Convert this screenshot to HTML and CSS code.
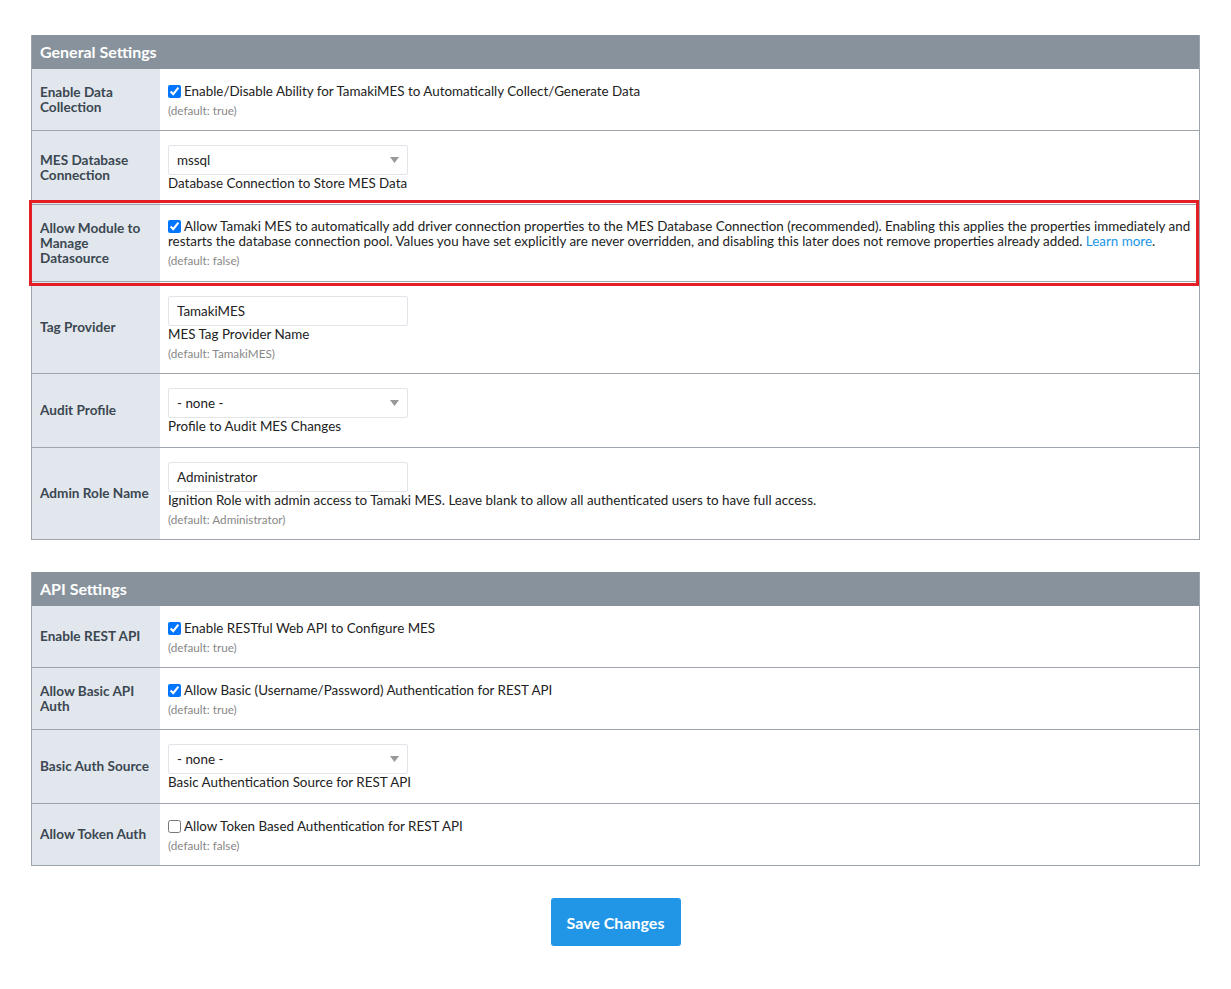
FILE: index.html
```html
<!DOCTYPE html>
<html lang="en">
<head>
  <meta charset="UTF-8" />
  <meta name="viewport" content="width=device-width, initial-scale=1.0" />
  <title>Tamaki MES Settings</title>
  <link rel="stylesheet" href="styles.css">
</head>
<body>
  <div class="panel">
    <div class="panel-head">General Settings</div>

    <div class="row">
      <div class="row-label">Enable Data Collection</div>
      <div class="row-value">
        <label class="check"><input type="checkbox" checked />Enable/Disable Ability for TamakiMES to Automatically Collect/Generate Data</label>
        <div class="hint">(default: true)</div>
      </div>
    </div>

    <div class="row">
      <div class="row-label">MES Database Connection</div>
      <div class="row-value">
        <div class="select"><span>mssql</span><svg width="9" height="6" viewBox="0 0 9 6"><path d="M0 0h9L4.5 6z" fill="#999"/></svg></div>
        <div class="desc">Database Connection to Store MES Data</div>
      </div>
    </div>

    <div class="row flagged">
      <div class="row-label">Allow Module to Manage Datasource</div>
      <div class="row-value">
        <label class="check"><input type="checkbox" checked />Allow Tamaki MES to automatically add driver connection properties to the MES Database Connection (recommended). Enabling this applies the properties immediately and restarts the database connection pool. Values you have set explicitly are never overridden, and disabling this later does not remove properties already added. <a href="#">Learn more</a>.</label>
        <div class="hint">(default: false)</div>
      </div>
    </div>

    <div class="row">
      <div class="row-label">Tag Provider</div>
      <div class="row-value">
        <input class="field" type="text" value="TamakiMES" />
        <div class="desc">MES Tag Provider Name</div>
        <div class="hint">(default: TamakiMES)</div>
      </div>
    </div>

    <div class="row">
      <div class="row-label">Audit Profile</div>
      <div class="row-value">
        <div class="select"><span>- none -</span><svg width="9" height="6" viewBox="0 0 9 6"><path d="M0 0h9L4.5 6z" fill="#999"/></svg></div>
        <div class="desc">Profile to Audit MES Changes</div>
      </div>
    </div>

    <div class="row">
      <div class="row-label">Admin Role Name</div>
      <div class="row-value">
        <input class="field" type="text" value="Administrator" />
        <div class="desc">Ignition Role with admin access to Tamaki MES. Leave blank to allow all authenticated users to have full access.</div>
        <div class="hint">(default: Administrator)</div>
      </div>
    </div>
  </div>

  <div class="panel">
    <div class="panel-head">API Settings</div>

    <div class="row">
      <div class="row-label">Enable REST API</div>
      <div class="row-value">
        <label class="check"><input type="checkbox" checked />Enable RESTful Web API to Configure MES</label>
        <div class="hint">(default: true)</div>
      </div>
    </div>

    <div class="row">
      <div class="row-label">Allow Basic API Auth</div>
      <div class="row-value">
        <label class="check"><input type="checkbox" checked />Allow Basic (Username/Password) Authentication for REST API</label>
        <div class="hint">(default: true)</div>
      </div>
    </div>

    <div class="row">
      <div class="row-label">Basic Auth Source</div>
      <div class="row-value">
        <div class="select"><span>- none -</span><svg width="9" height="6" viewBox="0 0 9 6"><path d="M0 0h9L4.5 6z" fill="#999"/></svg></div>
        <div class="desc">Basic Authentication Source for REST API</div>
      </div>
    </div>

    <div class="row">
      <div class="row-label">Allow Token Auth</div>
      <div class="row-value">
        <label class="check"><input type="checkbox" />Allow Token Based Authentication for REST API</label>
        <div class="hint">(default: false)</div>
      </div>
    </div>
  </div>

  <div class="actions">
    <button class="save-btn">Save Changes</button>
  </div>
</body>
</html>
```

FILE: styles.css
```css
body {
  margin: 0;
  padding: 35px 31px 40px 31px;
  font-family: Lato, "Noto Sans", sans-serif;
  font-size: 13.4px;
  color: #222;
  background: white;
}
.panel {
  border: 1px solid #9ea4ab;
  border-top: none;
  margin-bottom: 32px;
}
.panel-head {
  background-color: #87929c;
  color: white;
  font-weight: bold;
  font-size: 16px;
  height: 34px;
  line-height: 34px;
  padding: 0 8px;
}
.row {
  display: grid;
  grid-template-columns: 128px 1fr;
  border-top: 1px solid #9ea4ab;
}
.panel-head + .row {
  border-top: none;
}
.row-label {
  background-color: #e1e7ed;
  color: #3c4752;
  font-weight: bold;
  font-size: 13.6px;
  line-height: 15px;
  padding: 0 8px;
  display: flex;
  align-items: center;
}
.row-value {
  padding: 14px 8px 12px 8px;
  line-height: 16px;
}
.flagged {
  position: relative;
}
.flagged::after {
  content: "";
  position: absolute;
  left: -3px;
  right: 0;
  top: -5px;
  bottom: -5px;
  border: 3px solid #e31e24;
  pointer-events: none;
}
.flagged .row-value {
  padding-bottom: 13px;
}
.flagged .check {
  line-height: 15px;
}
.check {
  display: block;
}
.check input {
  width: 13px;
  height: 13px;
  margin: 0 3px 0 0;
  vertical-align: -2px;
}
.check a {
  color: #2196e6;
  text-decoration: none;
}
.hint {
  margin-top: 3px;
  font-size: 11.7px;
  color: #888;
}
.desc {
  line-height: 17px;
}
.desc + .hint {
  margin-top: 2px;
}
.field,
.select {
  box-sizing: border-box;
  width: 240px;
  height: 30px;
  border: 1px solid #e1e5e9;
  border-radius: 2px;
  padding: 0 8px;
  font-family: inherit;
  font-size: 13.4px;
  color: #222;
  background: white;
  display: block;
  outline: none;
  margin: 0;
}
.select {
  display: flex;
  align-items: center;
  justify-content: space-between;
  padding-right: 8px;
}
.actions {
  text-align: center;
  margin-top: 32px;
}
.save-btn {
  width: 130px;
  height: 48px;
  border: none;
  border-radius: 3px;
  background-color: #2196e6;
  color: white;
  font-family: inherit;
  font-size: 16px;
  font-weight: bold;
  cursor: pointer;
}
```
